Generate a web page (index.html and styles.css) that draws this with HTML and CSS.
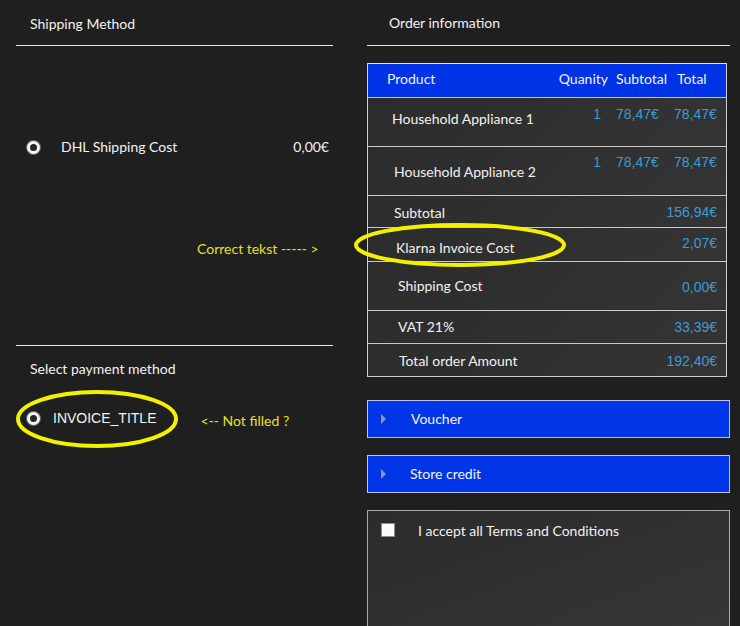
FILE: index.html
```html
<!DOCTYPE html>
<html>
<head>
<meta charset="utf-8">
<link rel="stylesheet" href="styles.css">
</head>
<body>
<div class="page">
  <div class="left">
    <div class="sec-head">Shipping Method</div>
    <div class="ship-body">
      <div class="ship-row">
        <span class="radio"></span>
        <span class="ship-label">DHL Shipping Cost</span>
        <span class="ship-price">0,00€</span>
      </div>
      <div class="note note-correct">Correct tekst ----- &gt;</div>
    </div>
    <div class="pay-head">Select payment method</div>
    <div class="pay-row">
      <span class="radio"></span>
      <span class="pay-label">INVOICE_TITLE</span>
      <span class="note note-filled">&lt;-- Not filled ?</span>
    </div>
  </div>

  <div class="right">
    <div class="sec-head order-head">Order information</div>
    <div class="table">
      <div class="thead">
        <span class="h-prod">Product</span>
        <span class="h-qty">Quanity</span>
        <span class="h-sub">Subtotal</span>
        <span class="h-tot">Total</span>
      </div>
      <div class="item item1">
        <span class="i-name">Household Appliance 1</span>
        <span class="i-qty">1</span>
        <span class="i-sub">78,47€</span>
        <span class="i-tot">78,47€</span>
      </div>
      <div class="item item2">
        <span class="i-name">Household Appliance 2</span>
        <span class="i-qty">1</span>
        <span class="i-sub">78,47€</span>
        <span class="i-tot">78,47€</span>
      </div>
      <div class="sum s-subtotal"><span class="s-label">Subtotal</span><span class="s-val">156,94€</span></div>
      <div class="sum s-klarna"><span class="s-label">Klarna Invoice Cost</span><span class="s-val">2,07€</span></div>
      <div class="sum s-ship"><span class="s-label">Shipping Cost</span><span class="s-val">0,00€</span></div>
      <div class="sum s-vat"><span class="s-label">VAT 21%</span><span class="s-val">33,39€</span></div>
      <div class="sum s-total"><span class="s-label">Total order Amount</span><span class="s-val">192,40€</span></div>
    </div>
    <div class="bar bar-voucher"><span class="tri"></span><span class="bar-text">Voucher</span></div>
    <div class="bar bar-credit"><span class="tri"></span><span class="bar-text">Store credit</span></div>
    <div class="terms">
      <span class="check"></span>
      <span class="terms-text">I accept all Terms and Conditions</span>
    </div>
  </div>

  <svg class="mark mark-klarna" width="216" height="48" viewBox="0 0 216 48"><ellipse cx="108" cy="24" rx="104" ry="20" fill="none" stroke="#f2f200" stroke-width="4"/></svg>
  <svg class="mark mark-invoice" width="166" height="62" viewBox="0 0 166 62"><ellipse cx="83" cy="31" rx="79" ry="27" fill="none" stroke="#f2f200" stroke-width="4"/></svg>
</div>
</body>
</html>
```

FILE: styles.css
```css
* { box-sizing: border-box; }
html, body { margin: 0; padding: 0; }
body {
  background: #1f1f1f;
  color: #f2f2f2;
  font-family: Lato, "Open Sans", sans-serif;
  font-size: 14px;
  line-height: 16px;
  width: 740px;
  height: 626px;
  overflow: hidden;
}
.page {
  position: relative;
  display: flex;
  padding-left: 16px;
}
.left { width: 317px; }
.right { width: 363px; margin-left: 34px; }

.sec-head {
  height: 46px;
  padding: 16px 0 0 14px;
  border-bottom: 1px solid #e6e6e6;
}
.order-head { padding: 15px 0 0 22px; }

.ship-body { height: 299px; padding-top: 93px; }
.ship-row {
  display: flex;
  align-items: center;
  height: 16px;
}
.radio {
  width: 13px;
  height: 13px;
  border-radius: 50%;
  border: 3px solid #f4f4f4;
  background: #262626;
  box-shadow: 0 0 0 1px #6a6a6a;
  margin-left: 11px;
  flex: none;
}
.ship-label { margin-left: 21px; }
.ship-price { margin-left: auto; margin-right: 4px; }
.note { color: #e6e02a; }
.note-correct { margin-top: 86px; padding-left: 181px; }

.pay-head {
  border-top: 1px solid #e6e6e6;
  padding: 15px 0 0 14px;
  height: 38px;
}
.pay-row {
  display: flex;
  align-items: center;
  margin-top: 26px;
  height: 18px;
}
.pay-label {
  font-family: "Liberation Sans", Arial, sans-serif;
  font-size: 14px;
  margin-left: 13px;
}
.note-filled { margin-left: 44px; margin-top: 6px; }

.table {
  margin-top: 17px;
  width: 360px;
  border: 1px solid #cfcfcf;
  border-top-color: #e0e0e0;
}
.thead, .item {
  display: grid;
  grid-template-columns: 186px 58px 60px 54px;
}
.thead {
  background: #0033e6;
  height: 33px;
  padding-top: 7px;
}
.h-prod { padding-left: 19px; }
.h-qty { text-align: right; padding-right: 4px; white-space: nowrap; }
.h-sub { padding-left: 4px; }
.h-tot { padding-left: 5px; }

.item, .sum {
  background: linear-gradient(135deg, #2c2c2c, #343434);
  border-top: 1px solid #c8c8c8;
}
.item { align-items: start; }
.i-qty, .i-sub, .i-tot, .s-val {
  font-family: "Liberation Sans", Arial, sans-serif;
  font-size: 14px;
  color: #3d9bd0;
}
.i-qty { text-align: right; padding-right: 11px; }
.i-sub { padding-left: 4px; }
.i-tot { padding-left: 2px; white-space: nowrap; }

.item1 { height: 49px; }
.item1 .i-name { padding: 13px 0 0 24px; }
.item1 .i-qty, .item1 .i-sub, .item1 .i-tot { padding-top: 8px; }
.item2 { height: 49px; }
.item2 .i-name { padding: 17px 0 0 26px; }
.item2 .i-qty, .item2 .i-sub, .item2 .i-tot { padding-top: 7px; }

.sum {
  display: flex;
  justify-content: space-between;
  align-items: flex-start;
}
.s-val { padding-right: 9px; }
.s-subtotal { height: 32px; }
.s-subtotal .s-label { padding: 9px 0 0 26px; }
.s-subtotal .s-val { padding-top: 8px; }
.s-klarna { height: 34px; }
.s-klarna .s-label { padding: 12px 0 0 28px; }
.s-klarna .s-val { padding-top: 7px; }
.s-ship { height: 49px; }
.s-ship .s-label { padding: 16px 0 0 30px; }
.s-ship .s-val { padding-top: 17px; }
.s-vat { height: 33px; }
.s-vat .s-label { padding: 8px 0 0 30px; }
.s-vat .s-val { padding-top: 8px; }
.s-total { height: 33px; }
.s-total .s-label { padding: 9px 0 0 31px; }
.s-total .s-val { padding-top: 9px; }

.bar {
  display: flex;
  align-items: center;
  height: 38px;
  background: #0036e8;
  border: 1px solid #b9c4f0;
}
.bar-voucher { margin-top: 23px; }
.bar-credit { margin-top: 17px; }
.tri {
  width: 0;
  height: 0;
  border-top: 5px solid transparent;
  border-bottom: 5px solid transparent;
  border-left: 5px solid #8f96a8;
  margin-left: 13px;
}
.bar-voucher .bar-text { margin-left: 25px; }
.bar-credit .bar-text { margin-left: 24px; }

.terms {
  margin-top: 17px;
  height: 130px;
  border: 1px solid #a9a9a9;
  background: linear-gradient(160deg, #2b2b2b, #363636);
  display: flex;
  align-items: flex-start;
  padding: 12px 0 0 13px;
}
.check {
  width: 14px;
  height: 14px;
  background: #fafafa;
  border: 1px solid #8a8a8a;
  flex: none;
}
.terms-text { margin-left: 23px; margin-top: 0; }

.mark { position: absolute; }
.mark-klarna { left: 352px; top: 221px; }
.mark-invoice { left: 14px; top: 388px; }
```
